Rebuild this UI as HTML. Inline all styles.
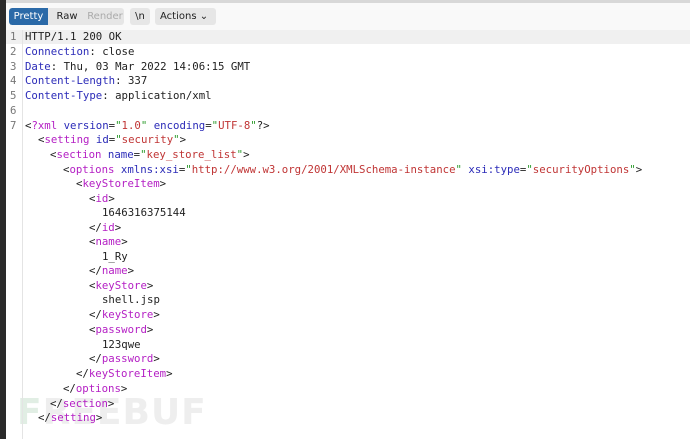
<!DOCTYPE html>
<html><head><meta charset="utf-8"><style>
*{margin:0;padding:0;box-sizing:border-box}
body{width:690px;height:439px;overflow:hidden;background:#fff;position:relative;font-family:"DejaVu Sans Mono","Liberation Mono",monospace;font-size:10.7px}
#lb{position:absolute;left:0;top:0;width:6px;height:439px;background:#2a2a2a}
#tb{position:absolute;left:6px;top:0;right:0;height:30px;background:#f9f9f9;border-top:3px solid #d8d8d8}
.grp{position:absolute;top:5px;height:17px;background:#e6e6e6;border-radius:3px;font-family:"DejaVu Sans","Liberation Sans",sans-serif;font-size:10px;line-height:17px;color:#222;white-space:nowrap;overflow:hidden}
.grp span{display:inline-block;padding:0 4px;height:17px}
#gut{position:absolute;left:22px;top:30px;width:1px;height:409px;background:#e4e4e4}
#hl{position:absolute;left:6px;top:30px;right:0;height:14px;background:#f0f0f0}
.l{position:absolute;left:25px;white-space:pre;color:#222;line-height:14px}
.n{position:absolute;left:10px;color:#777;line-height:14px}
.h{color:#2b2bb8}.t{color:#b41fc4}.a{color:#2b2bb8}.v{color:#c03535}.q{color:#2a9a2a}
#wm{position:absolute;left:17px;top:393px;font-family:"DejaVu Sans","Liberation Sans",sans-serif;font-weight:bold;font-size:36px;line-height:40px;color:#eeeeee;letter-spacing:1px;white-space:nowrap}
</style></head><body>
<div id="lb"></div>
<div id="tb">
<div class="grp" style="left:3px;width:115px"><span style="background:#2b6aa8;color:#fff;border-radius:3px 0 0 3px;width:39px;text-align:center;padding:0">Pretty</span><span style="width:38px;text-align:center;padding:0">Raw</span><span style="color:#aaa;width:38px;text-align:center;padding:0">Render</span></div>
<div class="grp" style="left:124px;width:20px;text-align:center">\n</div>
<div class="grp" style="left:149px;width:61px;padding-left:5px">Actions &#8964;</div>
</div>
<div id="hl"></div>
<div id="wm"><span style="color:#e1eee4">F</span>REEBUF</div>
<div id="gut"></div>
<div class="n" style="top:30px">1</div><div class="l" style="top:30px">HTTP/1.1 200 OK</div>
<div class="n" style="top:45px">2</div><div class="l" style="top:45px"><span class="h">Connection</span>: close</div>
<div class="n" style="top:60px">3</div><div class="l" style="top:60px"><span class="h">Date</span>: Thu, 03 Mar 2022 14:06:15 GMT</div>
<div class="n" style="top:74px">4</div><div class="l" style="top:74px"><span class="h">Content-Length</span>: 337</div>
<div class="n" style="top:89px">5</div><div class="l" style="top:89px"><span class="h">Content-Type</span>: application/xml</div>
<div class="n" style="top:104px">6</div>
<div class="n" style="top:119px">7</div><div class="l" style="top:119px">&lt;<span class="t">?xml</span> <span class="a">version</span>=<span class="q">"</span><span class="v">1.0</span><span class="q">"</span> <span class="a">encoding</span>=<span class="q">"</span><span class="v">UTF-8</span><span class="q">"</span>?&gt;</div>
<div class="l" style="top:133px;left:38px">&lt;<span class="t">setting</span> <span class="a">id</span>=<span class="q">"</span><span class="v">security</span><span class="q">"</span>&gt;</div>
<div class="l" style="top:148px;left:50px">&lt;<span class="t">section</span> <span class="a">name</span>=<span class="q">"</span><span class="v">key_store_list</span><span class="q">"</span>&gt;</div>
<div class="l" style="top:163px;left:63px">&lt;<span class="t">options</span> <span class="a">xmlns:xsi</span>=<span class="q">"</span><span class="v">http://www.w3.org/2001/XMLSchema-instance</span><span class="q">"</span> <span class="a">xsi:type</span>=<span class="q">"</span><span class="v">securityOptions</span><span class="q">"</span>&gt;</div>
<div class="l" style="top:177px;left:76px">&lt;<span class="t">keyStoreItem</span>&gt;</div>
<div class="l" style="top:192px;left:89px">&lt;<span class="t">id</span>&gt;</div>
<div class="l" style="top:206px;left:102px">1646316375144</div>
<div class="l" style="top:221px;left:89px">&lt;/<span class="t">id</span>&gt;</div>
<div class="l" style="top:235px;left:89px">&lt;<span class="t">name</span>&gt;</div>
<div class="l" style="top:250px;left:102px">1_Ry</div>
<div class="l" style="top:264px;left:89px">&lt;/<span class="t">name</span>&gt;</div>
<div class="l" style="top:279px;left:89px">&lt;<span class="t">keyStore</span>&gt;</div>
<div class="l" style="top:293px;left:102px">shell.jsp</div>
<div class="l" style="top:308px;left:89px">&lt;/<span class="t">keyStore</span>&gt;</div>
<div class="l" style="top:323px;left:89px">&lt;<span class="t">password</span>&gt;</div>
<div class="l" style="top:338px;left:102px">123qwe</div>
<div class="l" style="top:352px;left:89px">&lt;/<span class="t">password</span>&gt;</div>
<div class="l" style="top:367px;left:76px">&lt;/<span class="t">keyStoreItem</span>&gt;</div>
<div class="l" style="top:382px;left:63px">&lt;/<span class="t">options</span>&gt;</div>
<div class="l" style="top:397px;left:50px">&lt;/<span class="t">section</span>&gt;</div>
<div class="l" style="top:411px;left:38px">&lt;/<span class="t">setting</span>&gt;</div>
</body></html>
